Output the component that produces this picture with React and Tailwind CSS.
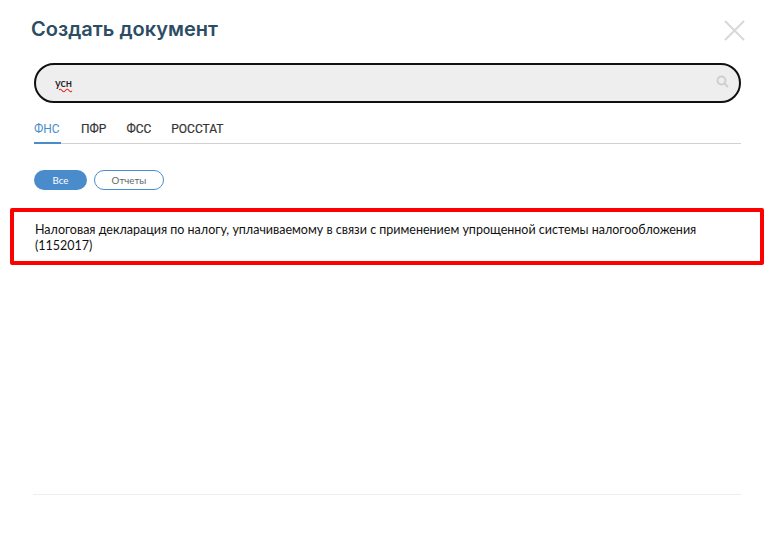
import React from 'react';

const tabs = ['ФНС', 'ПФР', 'ФСС', 'РОССТАТ'];

const App = () => {
  return (
    <div className="w-[778px] h-[533px] bg-white overflow-hidden flex flex-col font-['Lato',sans-serif]">
      {/* Header */}
      <div className="h-[63px] pl-[31px] pr-[33px] pt-[16px] flex justify-between items-start">
        <h1 className="text-[20px] leading-[26px] font-semibold text-[#2c4d63] font-['Inter',sans-serif]">Создать документ</h1>
        <button className="mt-[4px]">
          <svg width="21" height="21" viewBox="0 0 21 21" fill="none" stroke="#d8d8d8" strokeWidth="2">
            <path d="M1 1 L20 20 M20 1 L1 20" />
          </svg>
        </button>
      </div>

      {/* Search */}
      <div className="mx-[34px] w-[707px] h-[40px] flex items-center justify-between rounded-[20px] border-[2px] border-[#111] bg-[#eeeeee] pl-[19px] pr-[10px]">
        <span className="text-[11px] font-semibold text-[#222] underline decoration-wavy decoration-[#e22] underline-offset-1">усн</span>
        <svg width="13" height="13" viewBox="0 0 13 13" fill="none" stroke="#cfcfcf" strokeWidth="2" className="mb-[3px]">
          <circle cx="5.5" cy="5.5" r="4" />
          <path d="M8.5 8.5 L12 12" />
        </svg>
      </div>

      {/* Tabs */}
      <div className="mx-[34px] w-[707px] mt-[13px] h-[28px] flex gap-[20px] border-b border-[#d2d2d2] font-['Roboto',sans-serif] text-[12px]">
        {tabs.map((t, i) => (
          <div
            key={t}
            className={i === 0 ? 'w-[27px] h-[28px] pt-[4px] border-b-2 border-[#4a8ccb] text-[#4a8ccb]' : 'h-[28px] pt-[4px] text-[#333] [-webkit-text-stroke:0.2px_#333]'}
          >
            {t}
          </div>
        ))}
      </div>

      {/* Filters */}
      <div className="mx-[34px] mt-[26px] flex gap-[7px] text-[9.75px]">
        <div className="w-[53px] h-[20px] rounded-full bg-[#4a8ccb] text-white flex items-center justify-center">Все</div>
        <div className="w-[70px] h-[20px] rounded-full border border-[#4a8ccb] text-[#666] flex items-center justify-center">Отчеты</div>
      </div>

      {/* Result row */}
      <div className="ml-[10px] mt-[18px] w-[754px] h-[57px] rounded-[2px] border-[4px] border-[#ff0000] pl-[21px] pr-[40px] pt-[10px] text-[12.5px] leading-[16px] text-[#111]">
        Налоговая декларация по налогу, уплачиваемому в связи с применением упрощенной системы налогообложения (1152017)
      </div>

      {/* Footer line */}
      <div className="mx-[33px] mt-[229px] w-[708px] border-t border-[#eeeeee]" />
    </div>
  );
};

export default App;
